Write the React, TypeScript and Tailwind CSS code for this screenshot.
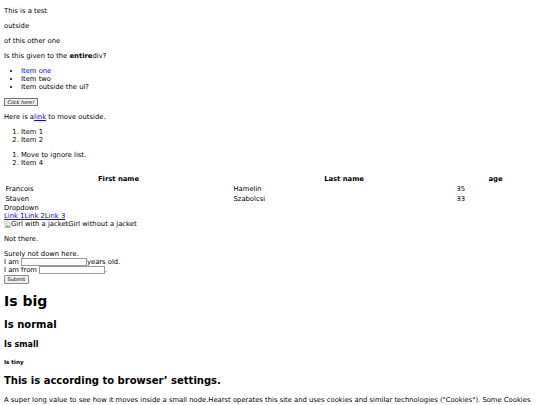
export default function App() {
  return (
    <div className="m-[4px] font-['DejaVu_Sans',Verdana,sans-serif] text-[6.8px] leading-[8px] text-black">
      <p className="my-[7px]">This is a test</p>
      <div>
        <p className="my-[7px]">outside</p>
        <p className="my-[7px]">of this other one</p>
      </div>
      <p className="my-[7px]">
        Is this given to the <b className="font-bold">entire</b>div?
      </p>

      <ul className="my-[7px] list-disc pl-[17px]">
        <li>
          <a href="#" className="text-[#0000ee]">Item one</a>
        </li>
        <li>Item two</li>
        <li>Item outside the ul?</li>
      </ul>

      <p className="my-[7px] h-[8px]">
        <button className="inline-flex h-[8px] items-center border border-[#767676] bg-[#efefef] px-[2.5px] align-top text-[5px] italic leading-none">
          Click here!
        </button>
      </p>

      <p className="my-[7px]">
        Here is a<a href="#" className="text-[#0000ee] underline">link</a> to move outside.
      </p>

      <ol className="my-[7px] list-decimal pl-[17px]">
        <li>Item 1</li>
        <li>Item 2</li>
      </ol>
      <ol className="my-[7px] list-decimal pl-[17px]">
        <li>Move to ignore list.</li>
        <li>Item 4</li>
      </ol>

      <table className="-mt-[1px] w-[532px] border-separate border-spacing-[1px]">
        <thead>
          <tr>
            <th className="w-[227px] p-[0.5px] text-center font-bold">First name</th>
            <th className="w-[222px] p-[0.5px] text-center font-bold">Last name</th>
            <th className="p-[0.5px] text-center font-bold">age</th>
          </tr>
        </thead>
        <tbody>
          <tr>
            <td className="p-[0.5px]">Francois</td>
            <td className="p-[0.5px]">Hamelin</td>
            <td className="p-[0.5px]">35</td>
          </tr>
          <tr>
            <td className="p-[0.5px]">Staven</td>
            <td className="p-[0.5px]">Szabolcsi</td>
            <td className="p-[0.5px]">33</td>
          </tr>
        </tbody>
      </table>

      <div>Dropdown</div>
      <div>
        <a href="#" className="text-[#0000ee] underline">Link 1</a>
        <a href="#" className="text-[#0000ee] underline">Link 2</a>
        <a href="#" className="text-[#0000ee] underline">Link 3</a>
      </div>
      <div className="flex items-center">
        <svg width="7" height="7" viewBox="0 0 16 16" className="shrink-0">
          <path d="M2 1h8l4 4v10H2z" fill="#f4f4f4" stroke="#9a9a9a" strokeWidth="1.2" />
          <path d="M3 14l4-5 3 3 2-2 2 4z" fill="#5fae4e" />
          <circle cx="6" cy="6" r="1.6" fill="#7aa7d8" />
        </svg>
        <span>Girl with a jacket</span>
        <span>Girl without a jacket</span>
      </div>

      <p className="my-[7px]">Not there.</p>

      <form className="my-[7px]">
        <div>Surely not down here.</div>
        <div className="flex items-center">
          I am
          <span className="ml-[2px] inline-block h-[8px] w-[66px] border border-[#9a9a9a] bg-white" />
          years old.
        </div>
        <div className="flex items-center">
          I am from
          <span className="ml-[2px] inline-block h-[8px] w-[66px] border border-[#9a9a9a] bg-white" />
          .
        </div>
        <button
          type="button"
          className="mt-[1px] flex h-[9px] items-center rounded-[1px] border border-[#8a8a8a] bg-[#efefef] px-[2.5px] text-[5px] leading-none"
        >
          Submit
        </button>
      </form>

      <h1 className="my-[9.4px] text-[14px] leading-[16.3px] font-bold">Is big</h1>
      <h2 className="my-[8.5px] text-[10px] leading-[12.2px] font-bold">Is normal</h2>
      <h3 className="my-[8px] text-[8px] leading-[9.5px] font-bold">Is small</h3>
      <h5 className="my-[9.5px] text-[5.6px] leading-[6.7px] font-bold">Is tiny</h5>
      <h2 className="my-[8.5px] text-[10px] leading-[12.2px] font-bold">This is according to browser’ settings.</h2>

      <p className="my-[7px] leading-[9px]">
        A super long value to see how it moves inside a small node.Hearst operates this site and uses cookies and
        similar technologies ("Cookies"). Some Cookies are necessary for the site to function, while others help us
        understand how you use it.
      </p>
    </div>
  );
}
